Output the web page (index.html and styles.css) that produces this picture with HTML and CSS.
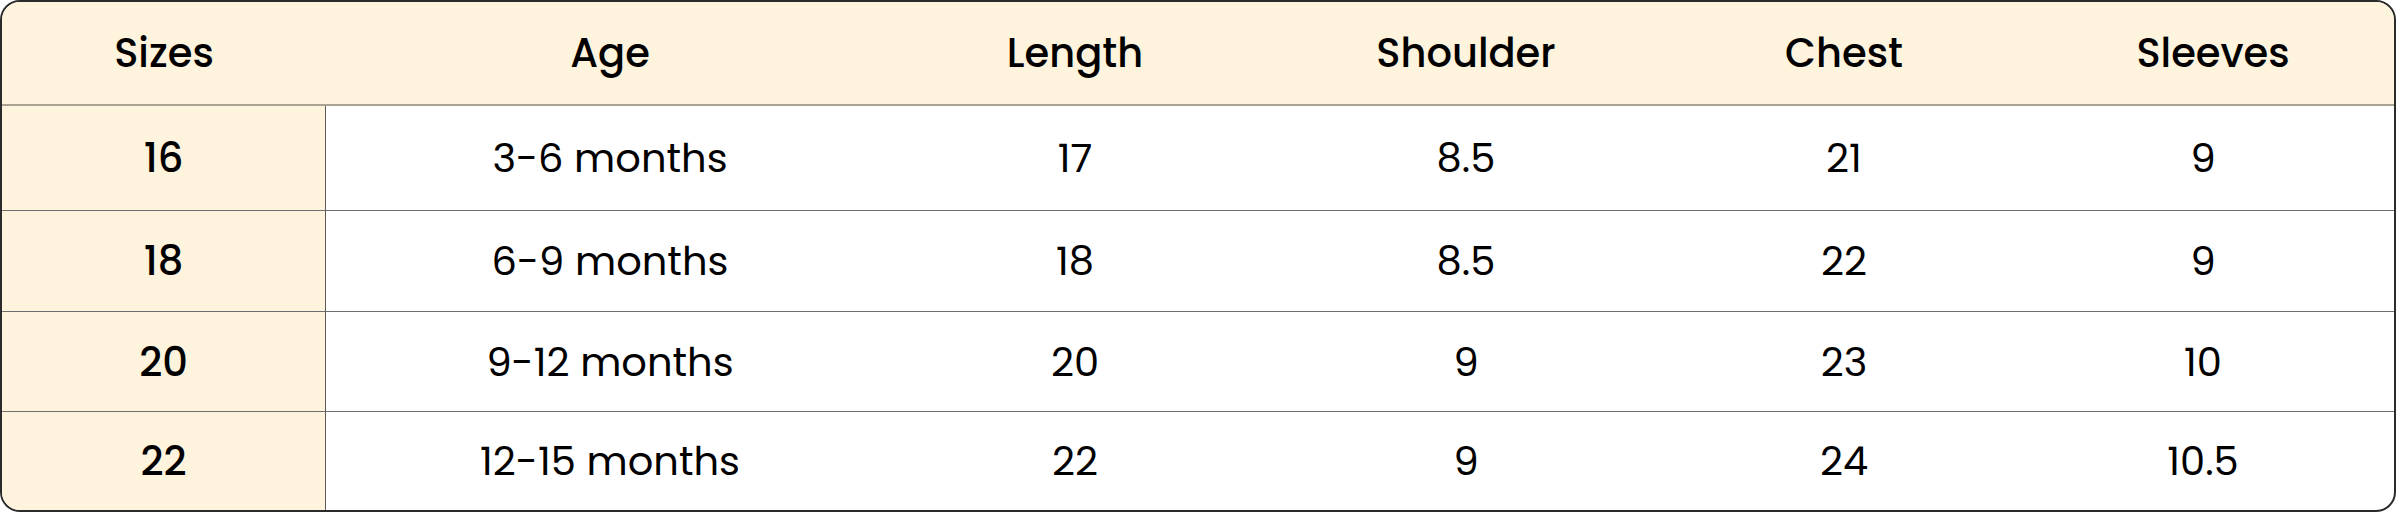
FILE: index.html
```html
<!DOCTYPE html>
<html lang="en">
<head>
<meta charset="utf-8">
<title>Size chart</title>
<link rel="stylesheet" href="styles.css">
</head>
<body>
<div class="chart">
  <div class="cell head">Sizes</div>
  <div class="cell head">Age</div>
  <div class="cell head">Length</div>
  <div class="cell head">Shoulder</div>
  <div class="cell head">Chest</div>
  <div class="cell head head-end">Sleeves</div>

  <div class="cell size">16</div>
  <div class="cell">3-6 months</div>
  <div class="cell">17</div>
  <div class="cell">8.5</div>
  <div class="cell">21</div>
  <div class="cell">9</div>

  <div class="cell size">18</div>
  <div class="cell">6-9 months</div>
  <div class="cell">18</div>
  <div class="cell">8.5</div>
  <div class="cell">22</div>
  <div class="cell">9</div>

  <div class="cell size">20</div>
  <div class="cell">9-12 months</div>
  <div class="cell">20</div>
  <div class="cell">9</div>
  <div class="cell">23</div>
  <div class="cell">10</div>

  <div class="cell size last">22</div>
  <div class="cell last">12-15 months</div>
  <div class="cell last">22</div>
  <div class="cell last">9</div>
  <div class="cell last">24</div>
  <div class="cell last">10.5</div>
</div>
</body>
</html>
```

FILE: styles.css
```css
html, body {
  margin: 0;
  padding: 0;
  background: #ffffff;
}

.chart {
  box-sizing: border-box;
  width: 2396px;
  height: 512px;
  border: 2px solid #2b2b2b;
  border-radius: 20px;
  overflow: hidden;
  display: grid;
  grid-template-columns: 324px 568px 362px 420px 336px 1fr;
  grid-template-rows: 104px 105px 101px 100px 1fr;
  font-family: "Poppins", "Open Sans", "DejaVu Sans", sans-serif;
  color: #000;
  background: #fff;
}

.cell {
  display: flex;
  align-items: center;
  justify-content: center;
  font-size: 40px;
  font-weight: 400;
  border-bottom: 1px solid #6e6e6e;
  white-space: nowrap;
}

.cell.last {
  border-bottom: none;
}

.cell.head {
  background: #fef3dc;
  font-weight: 500;
  border-bottom: 2px solid #aaa392;
}

.cell.head-end {
  padding-left: 20px;
}

.cell.size {
  background: #fef3dc;
  font-weight: 500;
  border-right: 1px solid #5a5a5a;
}
```
